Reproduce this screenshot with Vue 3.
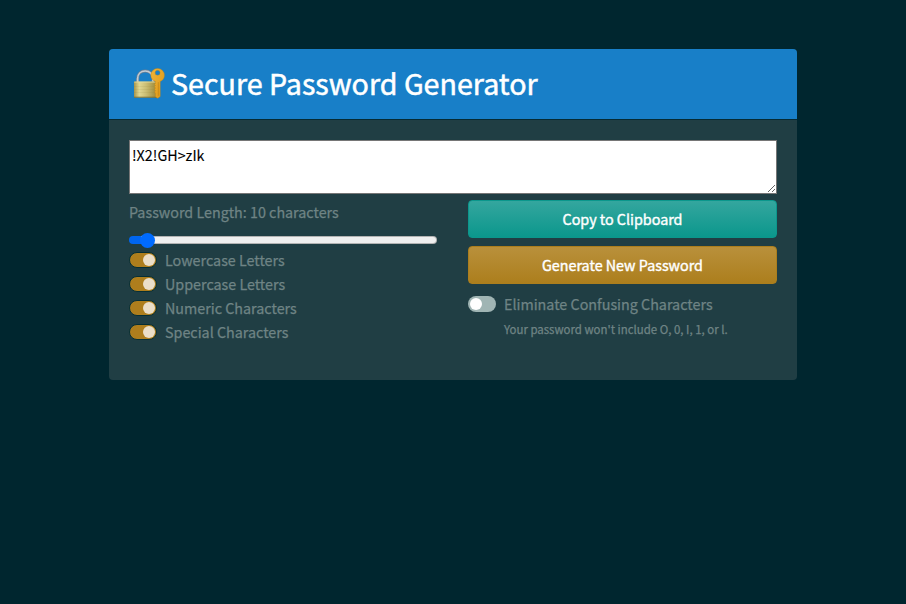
<script setup>
import { ref, computed } from 'vue'

const password = ref('!X2!GH>zIk')
const length = ref(10)
const minLength = 6
const maxLength = 128
const fill = computed(() => ((length.value - minLength) / (maxLength - minLength)) * 100)

const options = ref([
  { id: 'lower', label: 'Lowercase Letters', on: true },
  { id: 'upper', label: 'Uppercase Letters', on: true },
  { id: 'numeric', label: 'Numeric Characters', on: true },
  { id: 'special', label: 'Special Characters', on: true },
])
const eliminate = ref(false)
</script>

<template>
  <main class="card">
    <header class="card-header">
      <svg class="lock" viewBox="0 0 32 32" aria-hidden="true">
        <defs>
          <linearGradient id="brass" x1="0" x2="1" y1="0" y2="0">
            <stop offset="0" stop-color="#a8954a" />
            <stop offset=".22" stop-color="#e0d792" />
            <stop offset=".5" stop-color="#cabe74" />
            <stop offset="1" stop-color="#96802f" />
          </linearGradient>
          <linearGradient id="gold" x1="0" x2="1" y1="0" y2="1">
            <stop offset="0" stop-color="#f0b53a" />
            <stop offset="1" stop-color="#dc9614" />
          </linearGradient>
        </defs>
        <path d="M4.6 15v-4.2c0-5 3.4-7.8 7.6-7.8s7.8 2.8 7.8 7.8V15" fill="none" stroke="#6d7f92" stroke-width="2.9" />
        <path d="M4.6 15v-4.2c0-5 3.4-7.8 7.6-7.8s7.8 2.8 7.8 7.8V15" fill="none" stroke="#c0ccd6" stroke-width="1.7" />
        <rect x="1" y="13.6" width="24" height="16" rx=".6" fill="url(#brass)" />
        <path d="M1.3 14.1h23.4" stroke="#e5dca0" stroke-width=".8" />
        <path d="M1 18.5h24M1 21.5h24M1 24.5h24" stroke="#857637" stroke-width=".5" opacity=".2" />
        <path d="M1 29.2h24" stroke="#7c6825" stroke-width=".8" />
        <path
          fill="url(#gold)"
          stroke="#c98711"
          stroke-width=".4"
          fill-rule="evenodd"
          d="M24.6.4a6.8 6.8 0 0 0-6.8 6.8c0 3 1.8 5.2 4.6 6.2v2.1l-.8.8.9 1.2-1 1.3 1 1.2-.9 1.4.9 1.3-.9 1.3.9 1.2v3.5l2.2 1.6 2.5-1.8V13.4c2.6-.9 4.2-3.2 4.2-6.2A6.8 6.8 0 0 0 24.6.4zm0 1.9a2.5 2.5 0 1 1 0 5 2.5 2.5 0 0 1 0-5z"
        />
        <path d="M25.3 14.2v13.6" stroke="#b97a12" stroke-width=".6" />
      </svg>
      <h1 class="title">Secure Password Generator</h1>
    </header>

    <div class="card-body">
      <textarea v-model="password" class="output" spellcheck="false"></textarea>
      <div class="row">
        <section class="col">
          <label class="length" for="length">Password Length: {{ length }} characters</label>
          <div class="slider">
            <input
              id="length"
              v-model.number="length"
              class="range"
              type="range"
              :min="minLength"
              :max="maxLength"
              :style="{ '--fill': fill + '%' }"
            />
          </div>
          <label v-for="o in options" :key="o.id" class="option">
            <input v-model="o.on" type="checkbox" class="switch" />
            <span>{{ o.label }}</span>
          </label>
        </section>

        <section class="col">
          <button class="btn success">Copy to Clipboard</button>
          <button class="btn primary">Generate New Password</button>
          <label class="option">
            <input v-model="eliminate" type="checkbox" class="switch" />
            <span>Eliminate Confusing Characters</span>
          </label>
          <small class="hint">Your password won't include O, 0, I, 1, or l.</small>
        </section>
      </div>
    </div>
  </main>
</template>

<style>
body {
  background: #00262f;
}
</style>

<style scoped>
.card {
  box-sizing: border-box;
  width: 688px;
  height: 331px;
  margin: 49px auto 0;
  border-radius: 4px;
  overflow: hidden;
  background: #203e44;
  color: #6f8485;
  font-family: 'Noto Sans CJK SC', 'Noto Sans', sans-serif;
  font-size: 14.32px;
  line-height: 24px;
  -webkit-text-stroke: 0.25px currentColor;
}
.card-header {
  box-sizing: border-box;
  display: flex;
  align-items: center;
  height: 71px;
  padding: 0 24px;
  background: #187fc8;
  border-bottom: 1px solid #062b34;
}
.lock {
  width: 32px;
  height: 32px;
}
.title {
  margin: 0 0 2px 6px;
  color: #fff;
  font-size: 28.65px;
  font-weight: 400;
  line-height: 38px;
  -webkit-text-stroke: 0.5px currentColor;
}
.card-body {
  padding: 20px;
}
.output {
  display: block;
  box-sizing: border-box;
  width: 100%;
  height: 54px;
  margin: 0;
  padding: 2px;
  border: 1px solid #767676;
  border-radius: 0;
  outline: 0;
  background: #fff;
  color: #000;
  font: inherit;
  -webkit-text-stroke: 0.1px currentColor;
  resize: vertical;
}
.row {
  display: grid;
  grid-template-columns: 1fr 1fr;
  column-gap: 30px;
  padding-top: 6px;
}
.col {
  display: flex;
  flex-direction: column;
  min-width: 0;
}
.length {
  height: 24px;
}
.slider {
  display: flex;
  align-items: center;
  height: 24px;
  padding: 4px 1px 0 0;
  box-sizing: border-box;
  margin-top: 2px;
  margin-bottom: -2px;
}
.range {
  appearance: none;
  width: 100%;
  height: 15px;
  margin: 0;
  background: transparent;
}
.range::-webkit-slider-runnable-track {
  box-sizing: border-box;
  height: 8px;
  border: 1px solid transparent;
  border-radius: 4px;
  background:
    linear-gradient(to right, #0066f0 calc(var(--fill) + 2px), transparent 0) border-box,
    linear-gradient(#efefef, #efefef) padding-box,
    linear-gradient(#b2b2b2, #b2b2b2) border-box;
}
.range::-webkit-slider-thumb {
  appearance: none;
  width: 15px;
  height: 15px;
  margin-top: -4.5px;
  border-radius: 50%;
  background: #006bff;
}
.option {
  display: flex;
  align-items: center;
  height: 24px;
}
.switch {
  appearance: none;
  position: relative;
  flex: none;
  width: 28px;
  height: 16px;
  margin: 0 8px 0 0;
  border-radius: 8px;
  background: #a0b5b4;
}
.switch::after {
  content: '';
  position: absolute;
  top: 2px;
  left: 2px;
  width: 12px;
  height: 12px;
  border-radius: 50%;
  background: #fff;
}
.switch:checked {
  background: #ae7e1d;
  border: 1px solid #062f36;
}
.switch:checked::after {
  top: 1px;
  left: 13px;
  background: #ebdec8;
}
.btn {
  box-sizing: border-box;
  height: 38px;
  margin: 0 0 8px;
  padding: 0;
  border: 1px solid;
  border-radius: 4px;
  color: #fff;
  font: inherit;
  -webkit-text-stroke: 0.4px currentColor;
}
.success {
  border-color: #0b978c;
  background: linear-gradient(180deg, #34a69e, #0b978c);
}
.primary {
  border-color: #ac7e1d;
  background: linear-gradient(180deg, #b9903b, #ac7e1d);
}
.hint {
  padding-left: 36px;
  margin-top: 1px;
  font-size: 11.45px;
}
</style>
